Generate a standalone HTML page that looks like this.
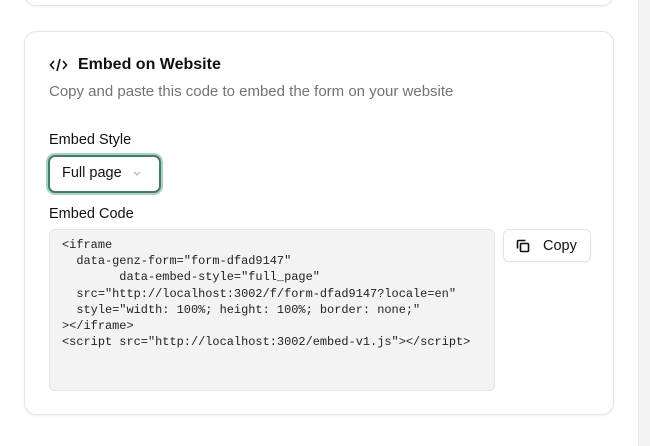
<!DOCTYPE html>
<html><head><style>
*{box-sizing:border-box;margin:0;padding:0}
body{width:650px;height:446px;background:#fff;font-family:"Liberation Sans",sans-serif;position:relative;overflow:hidden;color:#111}
.sb{position:absolute;left:638px;top:0;width:12px;height:446px;background:#f4f4f5;border-left:1px solid #e8e8e8}
.top{position:absolute;left:24px;top:-20px;width:590px;height:26px;border:1px solid #e4e4e7;border-radius:12px;box-shadow:0 1px 2px rgba(0,0,0,.06)}
.card{position:absolute;left:24px;top:31px;width:590px;height:384px;border:1px solid #e4e4e7;border-radius:12px;box-shadow:0 1px 2px rgba(0,0,0,.06)}
.abs{position:absolute}
.title{left:24px;top:24px;font-size:16px;font-weight:bold;color:#111;display:flex;align-items:center}
.sub{left:24px;top:51px;font-size:15px;color:#737373}
.lbl{font-size:14.5px;color:#111}
.sel{left:23px;top:123px;width:113px;height:38px;border:2px solid #3f7f6a;border-radius:7px;box-shadow:0 0 0 2px #a9d2c3;font-size:14.5px;padding:8px 0 0 12px;display:flex;gap:10px}
.ta{left:24px;top:197px;width:446px;height:162px;background:#f3f3f3;border:1px solid #e4e4e7;border-radius:6px;font-family:"Liberation Mono",monospace;font-size:11.95px;line-height:16.2px;color:#222;padding:7px 12px;white-space:pre}
.copy{left:478px;top:197px;width:88px;height:33px;border:1px solid #e4e4e7;border-radius:6px;box-shadow:0 1px 2px rgba(0,0,0,.05);font-size:14.5px;display:flex;align-items:center;padding-left:12px;gap:13px}
</style></head><body>
<div class="sb"></div>
<div class="top"></div>
<div class="card">
 <div class="abs title"><svg width="19" height="14" viewBox="0 0 19 14" fill="none" stroke="#111" stroke-width="1.6" style="margin-right:10px"><path d="M5 3L1.5 7L5 11M14 3L17.5 7L14 11M11 1L8 13"/></svg>Embed on Website</div>
 <div class="abs sub">Copy and paste this code to embed the form on your website</div>
 <div class="abs lbl" style="left:24px;top:100px">Embed Style</div>
 <div class="abs sel">Full page <svg width="10" height="18" viewBox="0 0 10 18" fill="none" stroke="#aaa" stroke-width="1"><path d="M2 7l3 3 3-3"/></svg></div>
 <div class="abs lbl" style="left:24px;top:174px">Embed Code</div>
 <div class="abs ta">&lt;iframe
  data-genz-form="form-dfad9147"
        data-embed-style="full_page"
  src="http://localhost:3002/f/form-dfad9147?locale=en"
  style="width: 100%; height: 100%; border: none;"
&gt;&lt;/iframe&gt;
&lt;script src="http://localhost:3002/embed-v1.js"&gt;&lt;/script&gt;</div>
 <div class="abs copy"><svg width="14" height="14" viewBox="0 0 14 14" fill="none" stroke="#111" stroke-width="1.6"><rect x="4.5" y="4.5" width="8" height="8" rx="1"/><path d="M1.5 9.5V2.5a1 1 0 0 1 1-1h7"/></svg>Copy</div>
</div>
</body></html>
